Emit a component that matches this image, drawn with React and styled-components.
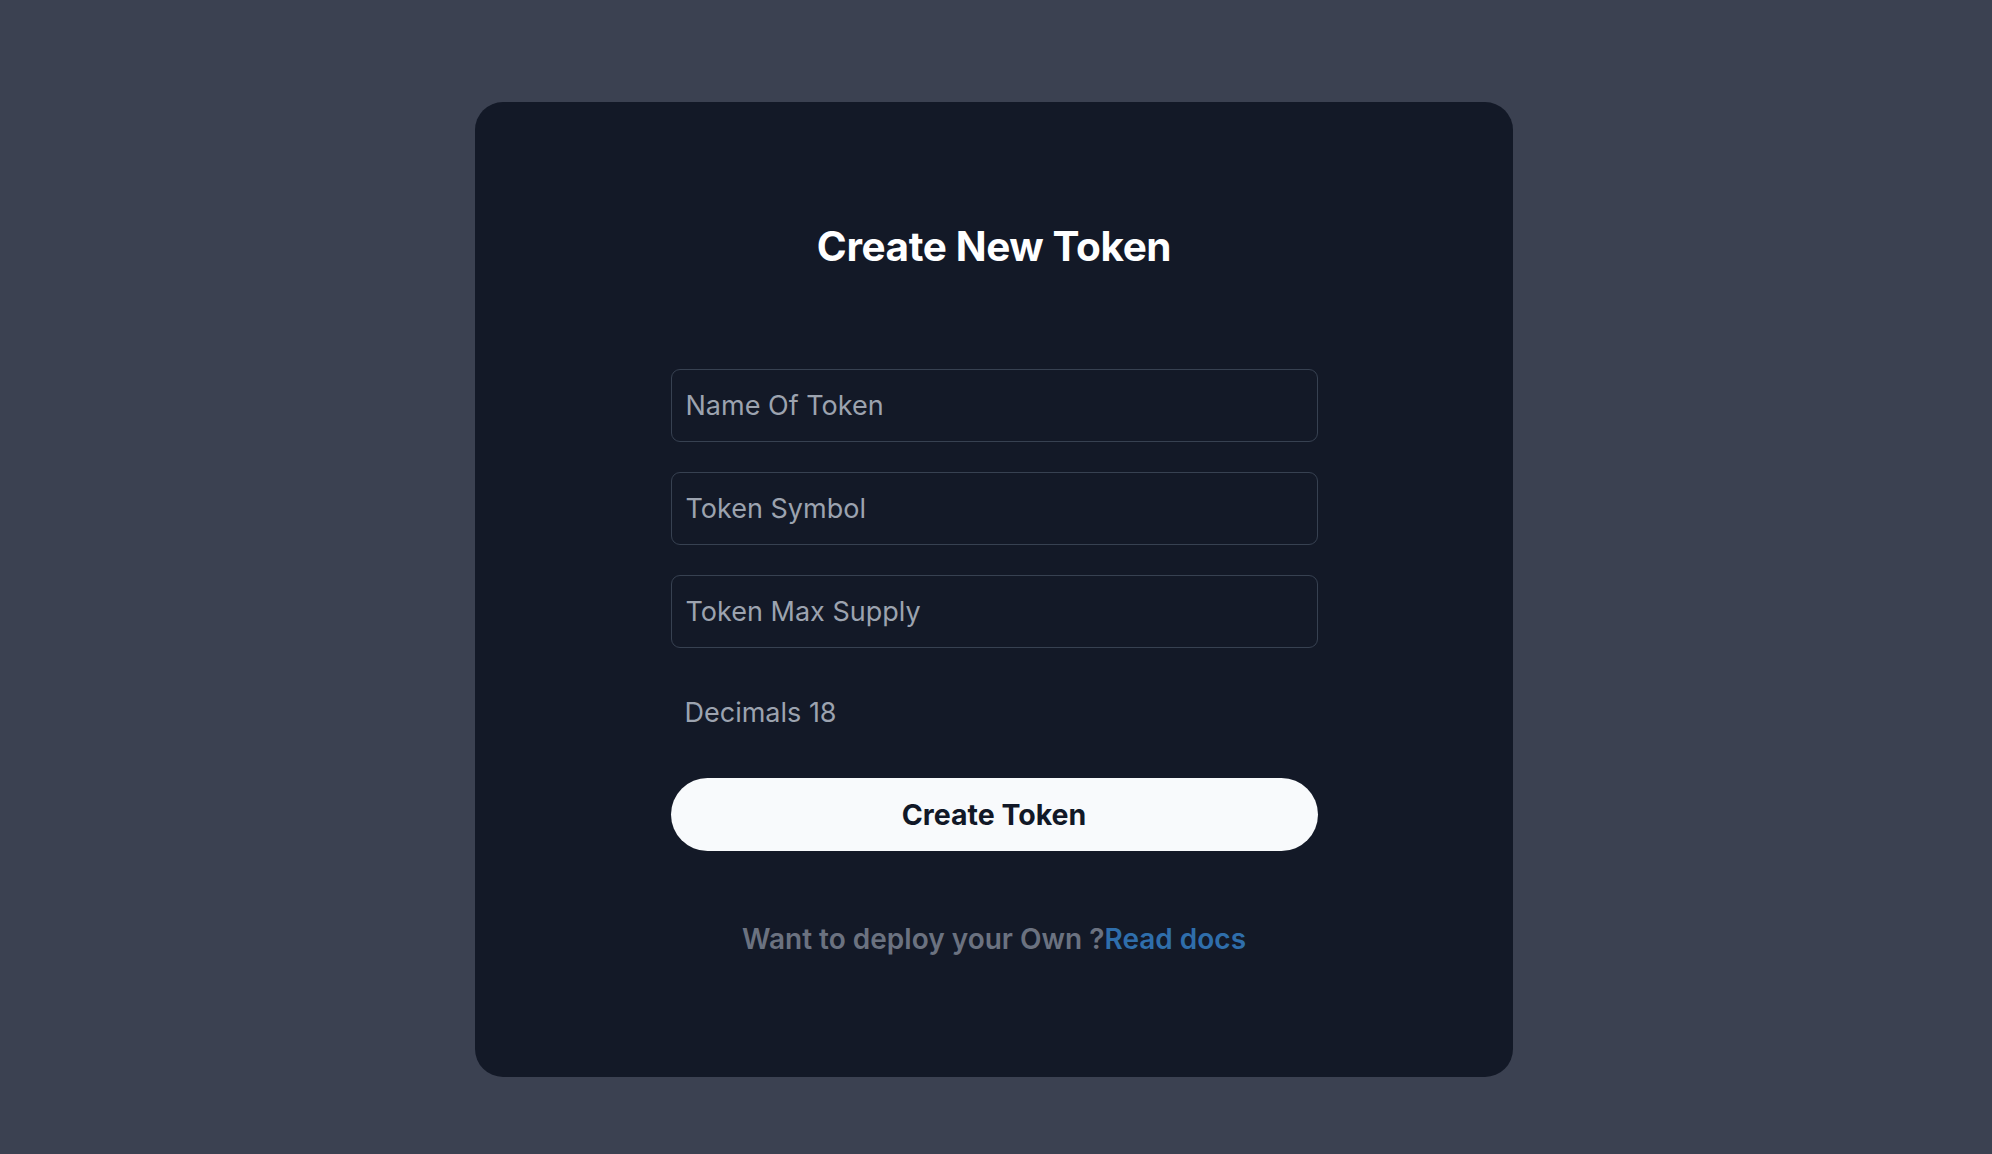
import React, { useState } from 'react'
import styled, { createGlobalStyle } from 'styled-components'

const GlobalStyle = createGlobalStyle`
  * {
    box-sizing: border-box;
  }
  body {
    margin: 0;
    background-color: #3b4151;
    font-family: Inter, "Noto Sans", sans-serif;
  }
`

const Page = styled.div`
  display: flex;
  justify-content: center;
  align-items: flex-start;
  min-height: 100vh;
  padding: 102px 4px 0 0;
  background-color: #3b4151;
`

const Card = styled.div`
  display: flex;
  flex-direction: column;
  align-items: center;
  width: 1038px;
  padding: 120px 0 120px;
  background-color: #131927;
  border-radius: 28px;
`

const Title = styled.h1`
  margin: 0;
  height: 50px;
  line-height: 50px;
  font-size: 40.5px;
  font-weight: 700;
  color: #ffffff;
  letter-spacing: -0.4px;
`

const Form = styled.form`
  display: flex;
  flex-direction: column;
  width: 647px;
  margin-top: 97px;
`

const Input = styled.input`
  height: 73px;
  padding: 0 14px;
  margin-bottom: 30px;
  font-family: Inter, "Noto Sans", sans-serif;
  font-size: 27px;
  color: #e5e7eb;
  background-color: transparent;
  border: 1px solid #374151;
  border-radius: 9px;
  outline: none;
  &:last-of-type {
    margin-bottom: 0;
  }
  &::placeholder {
    color: #9ca3af;
  }
`

const Decimals = styled.p`
  margin: 48px 0 0;
  padding-left: 14px;
  height: 34px;
  line-height: 34px;
  font-size: 27px;
  color: #9ca3af;
`

const CreateBtn = styled.button`
  height: 73px;
  margin-top: 48px;
  border: none;
  border-radius: 999px;
  background-color: #f8fafc;
  color: #111827;
  font-family: Inter, "Noto Sans", sans-serif;
  font-size: 28.5px;
  font-weight: 700;
  cursor: pointer;
`

const Footer = styled.p`
  margin: 70px 0 0;
  height: 36px;
  line-height: 36px;
  font-size: 28px;
  font-weight: 600;
  color: #6b7280;
`

const DocsLink = styled.a`
  color: #2f6eab;
  text-decoration: none;
  cursor: pointer;
`

export default function App() {
  const [name, setName] = useState('')
  const [symbol, setSymbol] = useState('')
  const [supply, setSupply] = useState('')

  const handleCreate = (e) => {
    e.preventDefault()
  }

  return (
    <>
      <GlobalStyle />
      <Page>
        <Card>
          <Title>Create New Token</Title>
          <Form>
            <Input placeholder="Name Of Token" value={name} onChange={(e) => setName(e.target.value)} />
            <Input placeholder="Token Symbol" value={symbol} onChange={(e) => setSymbol(e.target.value)} />
            <Input placeholder="Token Max Supply" value={supply} onChange={(e) => setSupply(e.target.value)} />
            <Decimals>Decimals 18</Decimals>
            <CreateBtn onClick={handleCreate}>Create Token</CreateBtn>
          </Form>
          <Footer>
            Want to deploy your Own ?<DocsLink href="#">Read docs</DocsLink>
          </Footer>
        </Card>
      </Page>
    </>
  )
}
